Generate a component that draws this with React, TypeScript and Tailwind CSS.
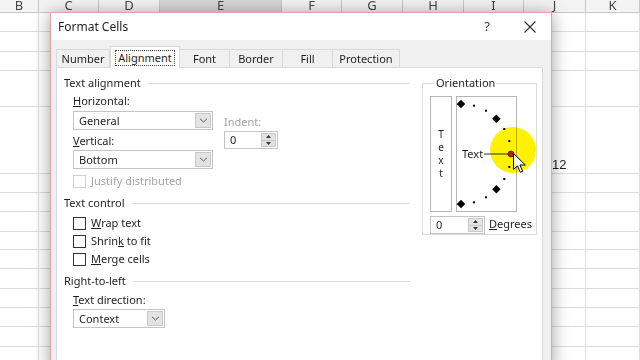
import React from "react";

const cols = ["B", "C", "D", "E", "F", "G", "H", "I", "J", "K"];
const rowCount = 15;

function Chevron() {
  return (
    <svg width="9" height="5" viewBox="0 0 9 5">
      <path d="M1 0.8l3.5 3.2L8 0.8" fill="none" stroke="#5a5a5a" strokeWidth="1" />
    </svg>
  );
}

function Select({ text, width }: { text: string; width: string }) {
  return (
    <div className={`flex h-[19px] border border-[#c4c4c4] bg-white ${width}`}>
      <span className="flex-1 pl-[5px] leading-[17px]">{text}</span>
      <div className="m-px flex w-[16px] items-center justify-center border border-[#c9c9c9] bg-[#e3e3e3]">
        <Chevron />
      </div>
    </div>
  );
}

function Spin({ width }: { width: string }) {
  return (
    <div className={`flex h-[18px] border border-[#c4c4c4] bg-white ${width}`}>
      <span className="flex-1 pl-[5px] leading-[16px]">0</span>
      <div className="my-px mr-px flex w-[15px] flex-col border border-[#c9c9c9] bg-[#e3e3e3]">
        <div className="flex flex-1 items-center justify-center border-b border-[#c9c9c9]">
          <svg width="5" height="3" viewBox="0 0 5 3">
            <path d="M0 3h5L2.5 0z" fill="#333" />
          </svg>
        </div>
        <div className="flex flex-1 items-center justify-center">
          <svg width="5" height="3" viewBox="0 0 5 3">
            <path d="M0 0h5L2.5 3z" fill="#333" />
          </svg>
        </div>
      </div>
    </div>
  );
}

function GroupHeader({ title }: { title: string }) {
  return (
    <div className="flex h-4 items-center">
      <span>{title}</span>
      <div className="ml-[7px] h-px flex-1 bg-[#dcdcdc]" />
    </div>
  );
}

function Check({ children, disabled }: { children: React.ReactNode; disabled?: boolean }) {
  return (
    <div className={`flex h-4 items-center gap-[5px] ${disabled ? "text-[#a3a3a3]" : ""}`}>
      <div className={`h-[13px] w-[13px] border bg-white ${disabled ? "border-[#d0d0d0]" : "border-[#333]"}`} />
      <span>{children}</span>
    </div>
  );
}

function Dial() {
  const cx = 4;
  const cy = 57;
  const r = 50;
  const marks = [];
  for (let a = -90; a <= 90; a += 15) {
    if (a === 0) continue;
    const x = cx + r * Math.cos((a * Math.PI) / 180);
    const y = cy - r * Math.sin((a * Math.PI) / 180);
    if (a % 45 === 0) {
      marks.push(<rect key={a} x={x - 3} y={y - 3} width="6" height="6" fill="#000" transform={`rotate(45 ${x} ${y})`} />);
    } else {
      marks.push(<rect key={a} x={x - 1} y={y - 1} width="2" height="2" fill="#000" />);
    }
  }
  return (
    <svg width="59" height="114" viewBox="0 0 59 114">
      {marks}
      <text x="5" y="61" fontSize="11" fill="#222" fontFamily="Noto Sans, sans-serif">Text</text>
      <line x1="27" y1="57" x2="53" y2="57" stroke="#333" strokeWidth="1" />
      <circle cx="54" cy="57" r="3" fill="#b3261e" stroke="#5a1510" strokeWidth="0.8" />
    </svg>
  );
}

export default function App() {
  const tabs = [
    { label: "Number", w: "w-[54px]" },
    { label: "Alignment", w: "w-[70px]", sel: true },
    { label: "Font", w: "w-[50px]" },
    { label: "Border", w: "w-[53px]" },
    { label: "Fill", w: "w-[50px]" },
    { label: "Protection", w: "w-[67px]" },
  ];

  return (
    <div className="relative h-[360px] w-[640px] overflow-hidden bg-white font-['Noto_Sans',sans-serif] text-[11px] text-[#1e1e1e]">
      {/* Spreadsheet grid */}
      <div className="grid grid-cols-[39px_60px_61px_122px_60px_61px_61px_60px_62px_1fr] grid-rows-[13px_19px_20px_19px_36px_67px_19px_19px_20px_18px_19px_20px_19px_19px_20px_20px]">
        {cols.map((c) => (
          <div
            key={c}
            className={`flex items-end justify-center overflow-hidden border-r border-b border-[#c8c8c8] text-[13px] leading-[13px] text-[#444] ${
              c === "E" ? "bg-[#d6d6d6]" : "bg-[#f3f3f3]"
            }`}
          >
            {c}
          </div>
        ))}
        {Array.from({ length: rowCount }).map((_, r) =>
          cols.map((c) => (
            <div key={`${r}-${c}`} className="flex items-end border-r border-b border-[#dcdcdc] pb-[1px] font-['Liberation_Sans',sans-serif] text-[13px] leading-[15px]">
              {r === 4 && c === "J" ? <span className="pl-[28px]">12</span> : null}
            </div>
          ))
        )}
      </div>

      {/* Format Cells dialog */}
      <div className="absolute top-[12px] left-[50px] flex h-[360px] w-[502px] flex-col border border-[#e2a3a3] bg-[#f0f0f0] shadow-[0_2px_16px_rgba(0,0,0,0.38)]">
        <div className="flex h-[27px] items-center bg-white pr-[15px] pl-[7px]">
          <span className="flex-1 text-[12px]">Format Cells</span>
          <span className="text-[13px] text-[#333]">?</span>
          <svg className="ml-[34px]" width="12" height="12" viewBox="0 0 12 12">
            <path d="M0.5 0.5l11 11M11.5 0.5l-11 11" stroke="#333" strokeWidth="1.1" />
          </svg>
        </div>

        <div className="flex flex-1 flex-col pt-[6px] pr-[8px] pl-[5px]">
          {/* Tabs */}
          <div className="flex items-end">
            {tabs.map((t, i) =>
              t.sel ? (
                <div key={t.label} className={`relative z-10 flex h-[22px] items-center justify-center border border-b-0 border-[#d9d9d9] bg-white ${t.w}`}>
                  <span className="border border-dotted border-[#444] px-[2px] leading-[14px]">{t.label}</span>
                </div>
              ) : (
                <div
                  key={t.label}
                  className={`flex h-[19px] items-center justify-center border-t border-r border-[#d9d9d9] bg-[#f0f0f0] ${i === 0 ? "border-l" : ""} ${t.w}`}
                >
                  {t.label}
                </div>
              )
            )}
          </div>

          {/* Panel */}
          <div className="-mt-px flex flex-1 border border-[#d9d9d9] bg-white pt-[7px] pr-[5px] pl-[7px]">
            <div className="flex w-[346px] flex-col">
              <GroupHeader title="Text alignment" />
              <div className="ml-[9px] flex gap-[11px]">
                <div className="flex w-[140px] flex-col">
                  <div className="mt-[2px] flex h-4 items-center">
                    <span><span className="underline">H</span>orizontal:</span>
                  </div>
                  <div className="mt-[2px]">
                    <Select text="General" width="w-[140px]" />
                  </div>
                  <div className="mt-[3px] flex h-4 items-center">
                    <span><span className="underline">V</span>ertical:</span>
                  </div>
                  <div className="mt-px">
                    <Select text="Bottom" width="w-[140px]" />
                  </div>
                </div>
                <div className="flex flex-col pt-[23px]">
                  <div className="flex h-4 items-center text-[#a3a3a3]">Indent:</div>
                  <div className="mt-px">
                    <Spin width="w-[54px]" />
                  </div>
                </div>
              </div>
              <div className="mt-[4px] ml-[9px]">
                <Check disabled>Justify distributed</Check>
              </div>

              <div className="mt-[6px]">
                <GroupHeader title="Text control" />
              </div>
              <div className="ml-[9px] flex flex-col gap-[2px] pt-[4px]">
                <Check><span className="underline">W</span>rap text</Check>
                <Check>Shrin<span className="underline">k</span> to fit</Check>
                <Check><span className="underline">M</span>erge cells</Check>
              </div>

              <div className="mt-[6px]">
                <GroupHeader title="Right-to-left" />
              </div>
              <div className="mt-[3px] ml-[9px] flex h-4 items-center">
                <span><span className="underline">T</span>ext direction:</span>
              </div>
              <div className="mt-px ml-[9px]">
                <Select text="Context" width="w-[92px]" />
              </div>
            </div>

            {/* Orientation */}
            <fieldset className="ml-[12px] h-[160px] w-[115px] border border-[#dcdcdc] pl-[7px]">
              <legend className="ml-[5px] px-px leading-4">Orientation</legend>
              <div className="mt-[5px] flex gap-[4px]">
                <div className="flex h-[116px] w-[22px] flex-col items-center justify-center border border-[#b5b5b5] text-[10px] leading-[13px]">
                  <span className="block h-[13px]">T</span>
                  <span className="block h-[13px]">e</span>
                  <span className="block h-[13px]">x</span>
                  <span className="block h-[13px]">t</span>
                </div>
                <div className="h-[116px] w-[61px] border border-[#b5b5b5]">
                  <Dial />
                </div>
              </div>
              <div className="mt-[4px] flex items-center">
                <div className="h-[17px]">
                  <Spin width="w-[55px]" />
                </div>
                <span className="ml-[4px]"><span className="underline">D</span>egrees</span>
              </div>
            </fieldset>
          </div>
        </div>
      </div>

      {/* Cursor highlight */}
      <div className="absolute top-[127px] left-[490px] h-[46px] w-[46px] rounded-full bg-[#fff200] mix-blend-multiply blur-[0.5px]" />
      <svg className="absolute top-[153px] left-[513px]" width="13" height="21" viewBox="0 0 13 21">
        <path d="M0.5 0.5v16l4-3.6 2.8 6.4 2.4-1-2.8-6.3h5.4z" fill="#fff" stroke="#000" strokeWidth="1" strokeLinejoin="round" />
      </svg>
    </div>
  );
}
